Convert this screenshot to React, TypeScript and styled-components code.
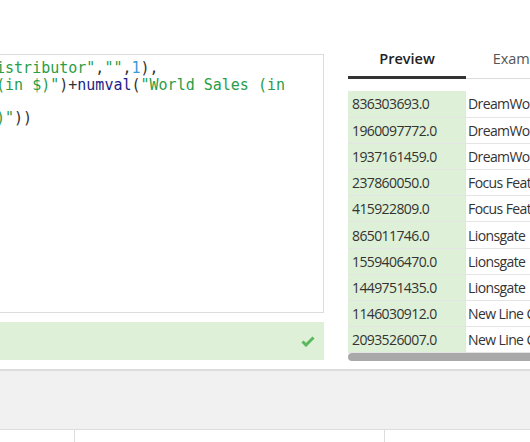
import styled, { createGlobalStyle } from 'styled-components';

const GlobalStyle = createGlobalStyle`
  html, body {
    margin: 0;
    padding: 0;
    background: #fff;
  }
  body {
    width: 530px;
    height: 442px;
    overflow: hidden;
    font-family: "Open Sans", "Noto Sans", sans-serif;
    color: #333;
  }
`;

const Page = styled.div`
  display: flex;
  flex-direction: column;
  height: 442px;
  overflow: hidden;
`;

const Workspace = styled.div`
  display: grid;
  grid-template-columns: 324px 1fr;
  column-gap: 24px;
  height: 361px;
`;

const EditorColumn = styled.div`
  display: flex;
  flex-direction: column;
  gap: 9px;
  padding-top: 54px;
  min-width: 0;
`;

const Editor = styled.div`
  height: 259px;
  box-sizing: border-box;
  border: 1px solid #dcdcdc;
  border-left: 0;
  overflow: hidden;
  padding-top: 5px;
`;

const Code = styled.pre`
  margin: 0 0 0 calc(-4ch - 4px);
  font-family: "DejaVu Sans Mono", monospace;
  font-size: 15px;
  line-height: 16.5px;
  white-space: pre;
  color: #333;
`;

const tokenColors = {
  str: '#2a9d47',
  num: '#3b99d8',
  fn: '#1d1f86',
  plain: '#333',
};

const Tok = styled.span<{ $kind: keyof typeof tokenColors }>`
  color: ${(p) => tokenColors[p.$kind]};
`;

const StatusBar = styled.div`
  height: 38px;
  background: #dff0d8;
  display: flex;
  align-items: center;
  justify-content: flex-end;
  padding-right: 9px;
`;

const PreviewColumn = styled.div`
  display: flex;
  flex-direction: column;
  padding-top: 39px;
  overflow: hidden;
  min-width: 0;
`;

const TabBar = styled.div`
  display: flex;
  border-bottom: 1px solid #ddd;
`;

const Tab = styled.div<{ $active?: boolean }>`
  flex: none;
  width: 118px;
  text-align: center;
  padding: 10px 0 7px;
  margin-bottom: -1px;
  font-size: 14.5px;
  line-height: 20px;
  font-weight: ${(p) => (p.$active ? 600 : 400)};
  color: ${(p) => (p.$active ? '#222' : '#555')};
  border-bottom: 3px solid ${(p) => (p.$active ? '#333' : 'transparent')};
`;

const TableWrap = styled.div`
  margin-top: 12px;
  width: 420px;
`;

const Table = styled.table`
  border-collapse: collapse;
  table-layout: fixed;
  width: 420px;
`;

const Row = styled.tr`
  height: 26.2px;
`;

const Cell = styled.td<{ $key?: boolean }>`
  padding: 0 ${(p) => (p.$key ? '4px' : '2px')};
  font-size: 14px;
  letter-spacing: -0.6px;
  color: #333;
  white-space: nowrap;
  overflow: hidden;
  border-bottom: 1px solid #e4e4e4;
  background: ${(p) => (p.$key ? '#dff0d8' : '#fff')};
  border-left: ${(p) => (p.$key ? '0' : '1px solid #e4e4e4')};
  width: ${(p) => (p.$key ? '109px' : 'auto')};
`;

const Scrollbar = styled.div`
  height: 8px;
  width: 260px;
  background: #a9a9a9;
  border-radius: 4px;
`;

const Footer = styled.div`
  margin-top: 8px;
  height: 58px;
  background: #f1f1f1;
  border-top: 2px solid #dcdcdc;
  border-bottom: 1px solid #dcdcdc;
`;

const FooterRow = styled.div`
  flex: 1;
  display: grid;
  grid-template-columns: 75px 310px 1fr;
`;

const FooterCell = styled.div`
  border-right: 1px solid #ddd;
`;

const rows: [string, string][] = [
  ['836303693.0', 'DreamWorks'],
  ['1960097772.0', 'DreamWorks'],
  ['1937161459.0', 'DreamWorks'],
  ['237860050.0', 'Focus Features'],
  ['415922809.0', 'Focus Features'],
  ['865011746.0', 'Lionsgate'],
  ['1559406470.0', 'Lionsgate'],
  ['1449751435.0', 'Lionsgate'],
  ['1146030912.0', 'New Line Cinema'],
  ['2093526007.0', 'New Line Cinema'],
];

const CheckIcon = () => (
  <svg width="14" height="11" viewBox="0 0 14 11">
    <path d="M1.5 5.5 L5 9 L12.5 1.5" fill="none" stroke="#5cb85c" strokeWidth="3" />
  </svg>
);

export default function App() {
  return (
    <Page>
      <GlobalStyle />
      <Workspace>
        <EditorColumn>
          <Editor>
            <Code>
              <Tok $kind="str">{'r("Distributor"'}</Tok>
              <Tok $kind="plain">,</Tok>
              <Tok $kind="str">""</Tok>
              <Tok $kind="plain">,</Tok>
              <Tok $kind="num">1</Tok>
              <Tok $kind="plain">),</Tok>
              {'\n'}
              <Tok $kind="str">{'les (in $)"'}</Tok>
              <Tok $kind="plain">)+</Tok>
              <Tok $kind="fn">numval</Tok>
              <Tok $kind="plain">(</Tok>
              <Tok $kind="str">"World Sales (in</Tok>
              {'\n'}
              {'\n'}
              <Tok $kind="str">{'in $)"'}</Tok>
              <Tok $kind="plain">))</Tok>
            </Code>
          </Editor>
          <StatusBar>
            <CheckIcon />
          </StatusBar>
        </EditorColumn>
        <PreviewColumn>
          <TabBar>
            <Tab $active>Preview</Tab>
            <Tab>Examples</Tab>
          </TabBar>
          <TableWrap>
            <Table>
              <tbody>
                {rows.map(([value, name]) => (
                  <Row key={value}>
                    <Cell $key>{value}</Cell>
                    <Cell>{name}</Cell>
                  </Row>
                ))}
              </tbody>
            </Table>
            <Scrollbar />
          </TableWrap>
        </PreviewColumn>
      </Workspace>
      <Footer />
      <FooterRow>
        <FooterCell />
        <FooterCell />
        <div />
      </FooterRow>
    </Page>
  );
}
